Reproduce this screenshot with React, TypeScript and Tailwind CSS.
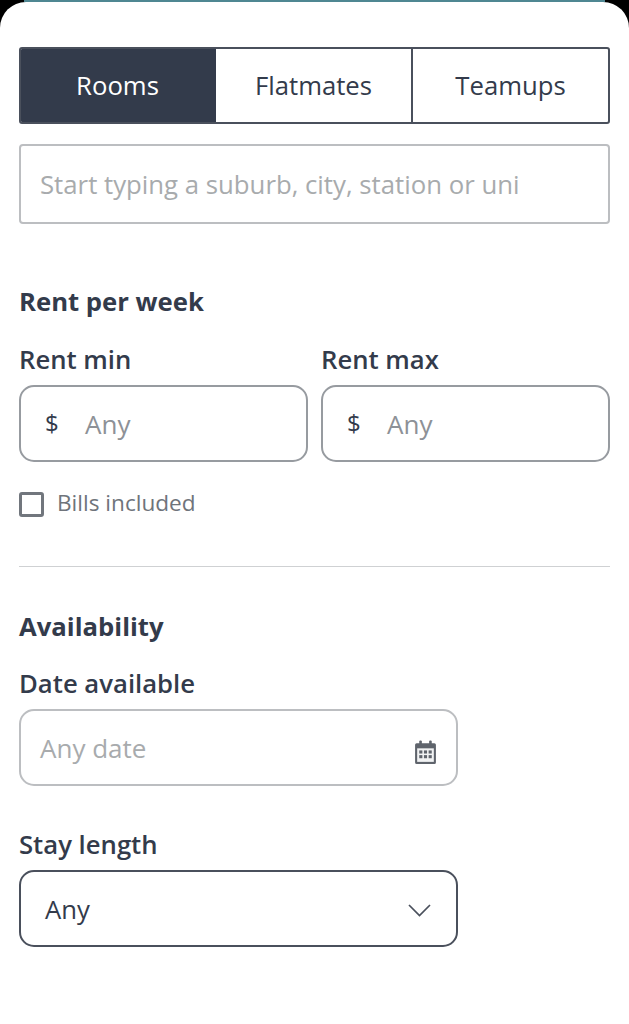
const tabs = ['Rooms', 'Flatmates', 'Teamups'];

function CalendarIcon() {
  return (
    <svg width="23" height="25" viewBox="0 0 22 24" className="mt-[9px] text-[#5f646c]">
      <rect x="5" y="0.5" width="2.5" height="5" rx="1" fill="currentColor" />
      <rect x="14.5" y="0.5" width="2.5" height="5" rx="1" fill="currentColor" />
      <path
        d="M2.5 3h17A1.5 1.5 0 0 1 21 4.500v17a1.500 1.500 0 0 1-1.500 1.500h-17A1.500 1.500 0 0 1 1 21.500v-17A1.500 1.500 0 0 1 2.500 3z"
        fill="currentColor"
      />
      <rect x="3" y="8" width="16" height="13" fill="#f2f3f4" />
      {[5, 9.5, 14].map((x) =>
        [10, 14.5].map((y) => (
          <rect key={`${x}-${y}`} x={x} y={y} width="3" height="3" fill="currentColor" />
        )),
      )}
    </svg>
  );
}

function RentField({ label }: { label: string }) {
  return (
    <div className="flex-1">
      <div className="text-[25.7px] leading-[32px] font-semibold text-[#333b4b]">{label}</div>
      <div className="mt-[9px] flex h-[77px] items-center rounded-[15px] border-2 border-[#979ba0] pl-[24px]">
        <span className="mb-[2px] w-[40px] text-[24px] text-[#333b4b]">$</span>
        <span className="pt-[2px] text-[26px] text-[#8d9197]">Any</span>
      </div>
    </div>
  );
}

export default function App() {
  return (
    <div className="h-[1024px] bg-black font-['Open_Sans',sans-serif]">
      <div className="mx-[24px] h-[2px] bg-[#4f8792]" />
      <div className="h-[1022px] rounded-t-[26px] bg-white pt-[45px] pr-[19px] pl-[19px]">
        {/* tabs */}
        <div className="flex h-[77px] overflow-hidden rounded-[3px] border-2 border-[#4a505c]">
          {tabs.map((tab, idx) => (
            <div
              key={tab}
              className={`flex flex-1 items-center justify-center pt-[2px] text-[25.7px] ${
                idx === 0 ? 'bg-[#333b4b] text-white' : 'text-[#333b4b]'
              } ${idx === 2 ? 'border-l-2 border-[#4a505c]' : ''}`}
            >
              <span className={idx === 0 ? 'mr-[2px]' : ''}>{tab}</span>
            </div>
          ))}
        </div>

        <div className="mt-[20px] flex h-[80px] items-center rounded-[4px] border-2 border-[#bcbec1] pl-[19px] text-[25.75px] text-[#a8abad]">
          Start typing a suburb, city, station or uni
        </div>

        <div className="mt-[61px] text-[25.7px] leading-[34px] font-bold text-[#333b4b]">Rent per week</div>
        <div className="mt-[25px] flex gap-[13px]">
          <RentField label="Rent min" />
          <RentField label="Rent max" />
        </div>

        <div className="mt-[30px] flex h-[25px] items-center">
          <span className="h-[25px] w-[25px] rounded-[3px] border-[3px] border-[#71767d]" />
          <span className="mb-[3px] ml-[13px] text-[22.6px] leading-[28px] text-[#6f747b]">Bills included</span>
        </div>

        <div className="mt-[49px] h-[1px] bg-[#cfd1d3]" />

        <div className="mt-[43px] text-[25.7px] leading-[34px] font-bold text-[#333b4b]">Availability</div>
        <div className="mt-[24px] text-[25.7px] leading-[32px] font-semibold text-[#333b4b]">Date available</div>
        <div className="mt-[9px] flex h-[77px] w-[439px] items-center justify-between rounded-[15px] border-2 border-[#bcbec1] pr-[19px] pl-[19px]">
          <span className="pt-[2px] text-[26px] text-[#a8abad]">Any date</span>
          <CalendarIcon />
        </div>

        <div className="mt-[43px] text-[25.7px] leading-[32px] font-semibold text-[#333b4b]">Stay length</div>
        <div className="mt-[9px] flex h-[77px] w-[439px] items-center justify-between rounded-[15px] border-2 border-[#4a505c] pr-[25px] pl-[24px]">
          <span className="pt-[3px] text-[25.7px] text-[#333b4b]">Any</span>
          <svg width="23" height="13" viewBox="0 0 23 13" fill="none" className="mt-[3px] text-[#4a505c]">
            <path d="M1 1l10.500 10.500L22 1" stroke="currentColor" strokeWidth="1.700" />
          </svg>
        </div>
      </div>
    </div>
  );
}
